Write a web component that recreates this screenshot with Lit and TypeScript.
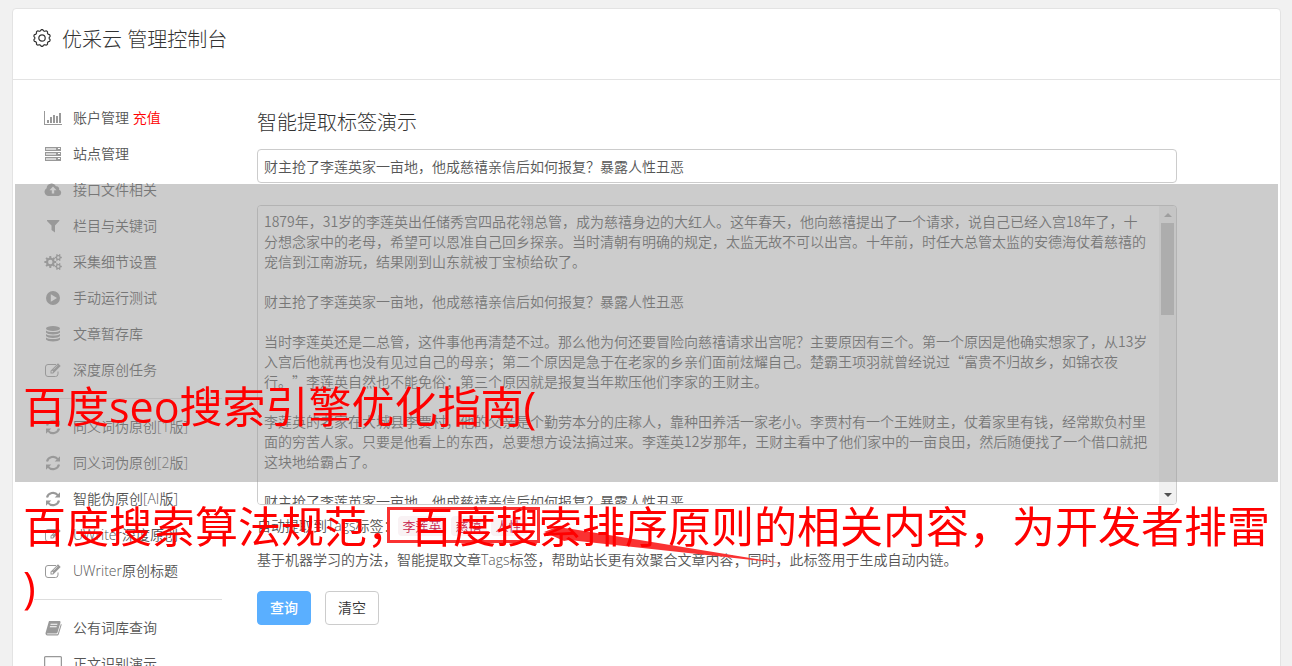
import { LitElement, html, css, svg, TemplateResult } from "lit";
import { customElement, state } from "lit/decorators.js";

type IconName = "chart" | "server" | "upload" | "filter" | "cogs" | "play" | "database" | "edit" | "refresh" | "book" | "screen";

interface MenuItem {
  icon: IconName;
  label: string;
  note?: string;
}

const gear = (cx: number, cy: number, r: number, inner: number, teeth: number, hole: number): string => {
  const points: string[] = [];
  const step = (Math.PI * 2) / teeth;
  for (let i = 0; i < teeth; i++) {
    const a = i * step;
    [[-0.32, inner], [-0.2, r], [0.2, r], [0.32, inner]].forEach(([k, d]) => {
      points.push(`${(cx + Math.cos(a + k * step) * d).toFixed(2)} ${(cy + Math.sin(a + k * step) * d).toFixed(2)}`);
    });
  }
  return `M${points.join("L")}Z M${cx - hole} ${cy}a${hole} ${hole} 0 1 0 ${hole * 2} 0a${hole} ${hole} 0 1 0 ${-hole * 2} 0Z`;
};

/* Closed outline with rounded lobes, used for the header cog. */
const lobes = (c: number, r: number, depth: number, count: number): string => {
  const points: string[] = [];
  for (let i = 0; i < 120; i++) {
    const a = (i / 120) * Math.PI * 2;
    const wave = Math.tanh(2 * Math.cos(a * count));
    const d = r + depth * wave;
    points.push(`${(c + Math.sin(a) * d).toFixed(2)} ${(c - Math.cos(a) * d).toFixed(2)}`);
  }
  return `M${points.join("L")}Z`;
};

const ICONS: Record<IconName, TemplateResult> = {
  chart: svg`<path d="M0 2h1v13h17v1H0zM3 11h2v3H3zM6 8h2v6H6zM9 6h2v8H9zM12 7h2v7h-2zM15 4h2v10h-2z"/>`,
  server: svg`<path fill-rule="evenodd" d="M1 2h16v4H1zM2 3v2h10V3zM14 3h2v1h-2zM1 7h16v4H1zM2 8v2h10V8zM14 8h2v1h-2zM1 12h16v4H1zM2 13v2h10v-2zM14 13h2v1h-2z"/><path opacity=".4" d="M2 3h10v2H2zM2 8h10v2H2zM2 13h10v2H2z"/>`,
  upload: svg`<path fill-rule="evenodd" d="M4.500 15A4.200 4.200 0 0 1 2.600 7.200 5 5 0 0 1 12 5.200a2.700 2.700 0 0 1 3 3.600A3.200 3.200 0 0 1 14.500 15zM9 5.500 5.500 9.300h2.300v3.200h2.400V9.300h2.300z"/>`,
  filter: svg`<path d="M3 3h12.500l-.3 1L11 8.500V15.500L7.500 13V8.500L3 4z"/>`,
  cogs: svg`<path fill-rule="evenodd" d="${gear(6.3, 9, 6, 4.4, 8, 2.2)}"/><path fill-rule="evenodd" d="${gear(14.3, 4.5, 3.6, 2.5, 6, 1.2)}"/><path fill-rule="evenodd" d="${gear(14.3, 13.5, 3.6, 2.5, 6, 1.2)}"/>`,
  play: svg`<path fill-rule="evenodd" d="M9 2a7 7 0 1 0 0 14A7 7 0 0 0 9 2zM6.800 5.300 13 9l-6.200 3.700z"/>`,
  database: svg`<ellipse cx="9" cy="3.500" rx="7" ry="2.500"/><path d="M2 5.500c2 2 12 2 14 0v2c-1.500 2.500-12.500 2.500-14 0zM2 9c2 2 12 2 14 0v2c-1.500 2.500-12.500 2.500-14 0zM2 12.500c2 2 12 2 14 0v2c-1.500 2.500-12.500 2.500-14 0z"/>`,
  edit: svg`<path fill="none" stroke="currentColor" stroke-width="1" d="M12 3.500H4A2.500 2.500 0 0 0 1.500 6v7A2.500 2.500 0 0 0 4 15.500h7.500A2.500 2.500 0 0 0 14 13v-2.500"/><path fill-rule="evenodd" d="M6.500 9.700 14 2.200l2.700 2.700-7.500 7.500H6.500zM7.500 10.200v1.200h1.200l.6-.6-1.200-1.200zM13.300 4.200 9.300 8.200l.4.400 4-4z"/>`,
  refresh: svg`<path fill="none" stroke="currentColor" stroke-width="2.200" d="M3 7.500a6.200 6.200 0 0 1 10.800-2.400M15 10.500a6.200 6.200 0 0 1-10.800 2.400"/><path d="M16 2.200v5.300h-5.300zM2 15.800v-5.300h5.300z"/>`,
  book: svg`<path fill-rule="evenodd" d="M5.500 2h9.800c1 0 1.500.6 1.200 1.500l-3 10c-.2.700-.7 1-1.400 1H3.500c-.5 0-.6.800.2.800h9c.6 0 1-.3 1.200-.9l3-9.600c.7.400.8.900.6 1.500l-2.700 8.900c-.3.900-.9 1.300-1.800 1.300H3.500C2 16.500 1.200 15 1.600 13.800l3-10.500C4.800 2.500 5 2 5.500 2zM6.700 4.800l-.3 1h6.800l.3-1zM6 7.300l-.3 1h6.800l.3-1z"/>`,
  screen: svg`<path fill="none" stroke="currentColor" stroke-width="1.300" d="M1.600 1.600h14.800a1 1 0 0 1 1 1v9H.6v-9a1 1 0 0 1 1-1z"/><path d="M0 13h18v2H0z"/>`,
};

const GROUPS: MenuItem[][] = [
  [
    { icon: "chart", label: "账户管理", note: "充值" },
    { icon: "server", label: "站点管理" },
    { icon: "upload", label: "接口文件相关" },
    { icon: "filter", label: "栏目与关键词" },
    { icon: "cogs", label: "采集细节设置" },
    { icon: "play", label: "手动运行测试" },
    { icon: "database", label: "文章暂存库" },
    { icon: "edit", label: "深度原创任务" },
  ],
  [
    { icon: "refresh", label: "同义词伪原创[1版]" },
    { icon: "refresh", label: "同义词伪原创[2版]" },
    { icon: "refresh", label: "智能伪原创[AI版]" },
    { icon: "edit", label: "UWriter深度原创" },
    { icon: "edit", label: "UWriter原创标题" },
  ],
  [
    { icon: "book", label: "公有词库查询" },
    { icon: "screen", label: "正文识别演示" },
  ],
];

const TAGS = ["李莲英", "慈禧", "人性"];

const TITLE = "财主抢了李莲英家一亩地，他成慈禧亲信后如何报复？暴露人性丑恶";

const ARTICLE = [
  "1879年，31岁的李莲英出任储秀宫四品花翎总管，成为慈禧身边的大红人。这年春天，他向慈禧提出了一个请求，说自己已经入宫18年了，十分想念家中的老母，希望可以恩准自己回乡探亲。当时清朝有明确的规定，太监无故不可以出宫。十年前，时任大总管太监的安德海仗着慈禧的宠信到江南游玩，结果刚到山东就被丁宝桢给砍了。",
  TITLE,
  "当时李莲英还是二总管，这件事他再清楚不过。那么他为何还要冒险向慈禧请求出宫呢？主要原因有三个。第一个原因是他确实想家了，从13岁入宫后他就再也没有见过自己的母亲；第二个原因是急于在老家的乡亲们面前炫耀自己。楚霸王项羽就曾经说过“富贵不归故乡，如锦衣夜行。”李莲英自然也不能免俗；第三个原因就是报复当年欺压他们李家的王财主。",
  "李莲英的老家在大城县李贾村，他的父亲是个勤劳本分的庄稼人，靠种田养活一家老小。李贾村有一个王姓财主，仗着家里有钱，经常欺负村里面的穷苦人家。只要是他看上的东西，总要想方设法搞过来。李莲英12岁那年，王财主看中了他们家中的一亩良田，然后随便找了一个借口就把这块地给霸占了。",
  TITLE,
].join("\n\n");

@customElement("app-root")
export class AppRoot extends LitElement {
  @state() private heading = TITLE;
  @state() private article = ARTICLE;

  static styles = css`
    :host {
      display: block;
      box-sizing: border-box;
      height: 100vh;
      overflow: hidden;
      position: relative;
      padding: 8px 11px 0 12px;
      background: #f1f1f1;
      color: #555;
      font: 14px/20px "Open Sans", "Noto Sans CJK SC", sans-serif;
      font-weight: 350;
      text-spacing-trim: space-all;
    }
    *, *::before, *::after { box-sizing: border-box; }
    .panel {
      min-height: 100vh;
      background: #fff;
      border: 1px solid #e3e3e3;
      border-radius: 4px;
    }
    .head {
      display: flex;
      gap: 10px;
      height: 71px;
      padding: 16px 19px;
      border-bottom: 1px solid #e3e3e3;
      color: #333;
    }
    .head svg { width: 20px; height: 20px; margin-top: 3px; }
    .head h1 { margin: 0; font-size: 20px; line-height: 30px; font-weight: 300; }
    .body { display: flex; gap: 35px; padding: 20px 103px 0 21px; }
    .side { flex: 0 0 188px; }
    .group { list-style: none; margin: 0; padding: 0; }
    .group + .group { margin-top: 10px; padding-top: 10px; border-top: 1px solid #ddd; }
    .item {
      display: flex;
      align-items: center;
      gap: 11px;
      height: 36px;
      padding-left: 10px;
      color: #555;
      text-decoration: none;
      white-space: nowrap;
    }
    .item svg { width: 18px; height: 18px; fill: currentColor; color: #999; }
    .note { color: #f00; }
    .main { flex: 1; min-width: 0; padding-top: 8px; }
    .main h2 { margin: 0 0 11px; color: #333; font-size: 20px; line-height: 30px; font-weight: 300; }
    .field {
      display: block;
      width: 100%;
      height: 34px;
      padding: 0 6px;
      border: 1px solid #ccc;
      border-radius: 4px;
      outline: 0;
      color: inherit;
      background: #fff;
      font: inherit;
      font-family: "Noto Sans CJK SC", sans-serif;
    }
    .area {
      display: flex;
      height: 300px;
      margin: 22px 0 11px;
      border: 1px solid #ccc;
      border-radius: 4px;
      overflow: hidden;
    }
    .area textarea {
      flex: 1;
      min-width: 0;
      padding: 5px 11px 5px 6px;
      border: 0;
      outline: 0;
      resize: none;
      color: inherit;
      background: #fff;
      font: inherit;
      font-family: "Noto Sans CJK SC", sans-serif;
      scrollbar-width: none;
      text-spacing-trim: space-all;
    }
    .track {
      display: flex;
      flex-direction: column;
      align-items: center;
      width: 17px;
      padding: 7px 0;
      background: #f1f1f1;
    }
    .thumb { width: 13px; height: 92px; margin: 6px 0 auto; background: #c1c1c1; }
    .up, .down { border: 4px solid transparent; }
    .up { border-top: 0; border-bottom-color: #a3a3a3; }
    .down { border-bottom: 0; border-top-color: #505050; }
    .tags { display: flex; align-items: center; height: 20px; }
    .tag {
      margin-right: 4px;
      padding: 0 5px;
      border-radius: 4px;
      color: #c7254e;
      background: #f9f2f4;
      font-size: 13px;
    }
    .about { margin: 14px 0 21px; }
    .actions { display: flex; gap: 14px; }
    .actions button {
      height: 34px;
      padding: 0 12px;
      border: 1px solid #ccc;
      border-radius: 4px;
      color: #333;
      background: #fff;
      font: inherit;
    }
    .actions .primary { border-color: #5aafff; background: #5aafff; color: #fff; font-weight: 500; }
    .mark { position: absolute; left: 387px; top: 507px; width: 402px; height: 60px; }
    .banner { position: absolute; top: 184px; left: 15px; right: 14px; }
    .shade { height: 298px; background: rgba(153, 153, 153, 0.5); }
    .caption {
      position: absolute;
      top: 193px;
      left: 8px;
      margin: 0;
      color: #f00;
      font-size: 43px;
      line-height: 60px;
      font-weight: 400;
      white-space: pre;
    }
    .caption p { margin: 0 0 60px; }
  `;

  private clear() {
    this.heading = "";
    this.article = "";
  }

  render() {
    return html`
      <div class="panel" lang="zh-CN">
        <header class="head">
          <svg viewBox="0 0 20 20" fill="none" stroke="currentColor" stroke-width="1.200" aria-hidden="true">
            <path d="${lobes(10, 7.8, 0.6, 10)}" stroke-linejoin="round"/>
            <circle cx="10" cy="10" r="3.200"/>
          </svg>
          <h1>优采云 管理控制台</h1>
        </header>
        <div class="body">
          <nav class="side">
            ${GROUPS.map((group) => html`
              <ul class="group">
                ${group.map((item) => html`
                  <li>
                    <a class="item" href="#">
                      <svg viewBox="0 0 18 18" aria-hidden="true">${ICONS[item.icon]}</svg>
                      <span>${item.label}${item.note ? html` <span class="note">${item.note}</span>` : ""}</span>
                    </a>
                  </li>`)}
              </ul>`)}
          </nav>
          <main class="main">
            <h2>智能提取标签演示</h2>
            <input class="field" type="text" aria-label="标题" .value=${this.heading} />
            <div class="area">
              <textarea aria-label="正文" spellcheck="false" .value=${this.article}></textarea>
              <div class="track" aria-hidden="true">
                <span class="up"></span>
                <span class="thumb"></span>
                <span class="down"></span>
              </div>
            </div>
            <div class="tags">
              <span>自动提取到Tags标签：</span>
              ${TAGS.map((tag) => html`<span class="tag">${tag}</span>`)}
            </div>
            <p class="about">基于机器学习的方法，智能提取文章Tags标签，帮助站长更有效聚合文章内容；同时，此标签用于生成自动内链。</p>
            <div class="actions">
              <button class="primary" type="button">查询</button>
              <button type="button" @click=${this.clear}>清空</button>
            </div>
          </main>
        </div>
      </div>
      <svg class="mark" viewBox="0 0 402 60" aria-hidden="true">
        <rect x="1.500" y="1.500" width="150" height="33" fill="none" stroke="#fa3232" stroke-width="3"/>
        <path fill="#fa3232" d="M157 25 170 20 185 22 394 56 182 33 177 34z"/>
      </svg>
      <div class="banner" lang="zh-CN">
        <div class="shade"></div>
        <div class="caption"><p>百度seo搜索引擎优化指南(</p>百度搜索算法规范，百度搜索排序原则的相关内容，为开发者排雷<br>)</div>
      </div>
    `;
  }
}
